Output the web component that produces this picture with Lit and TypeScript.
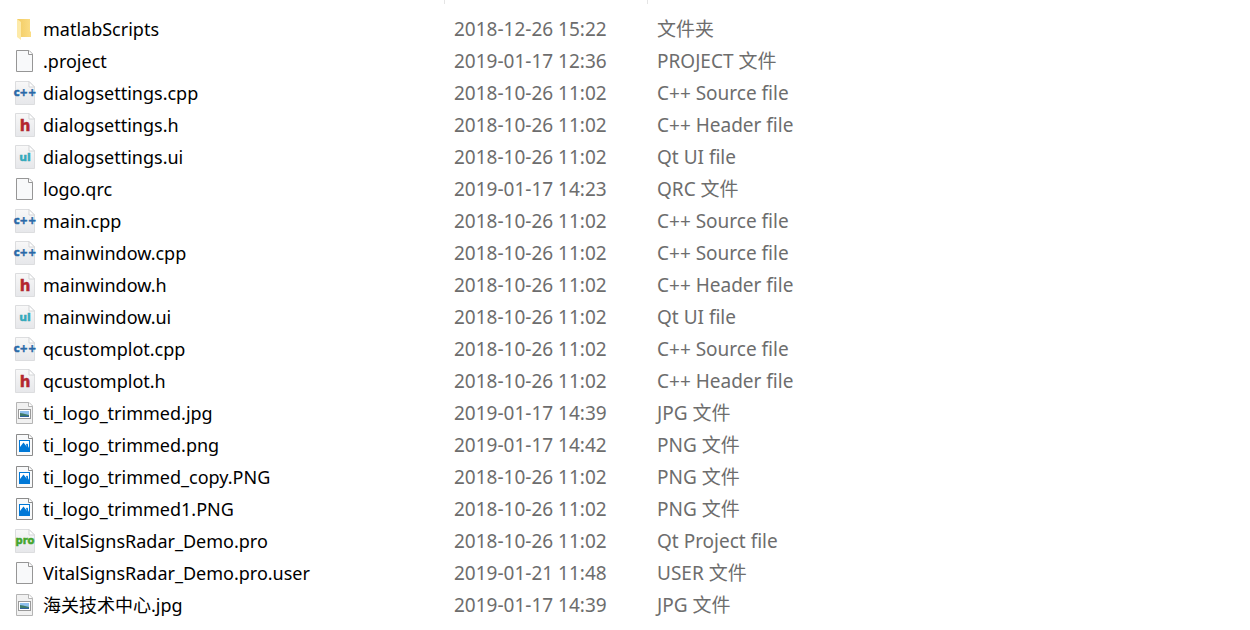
import { LitElement, html, css, svg, SVGTemplateResult } from "lit";
import { customElement, property } from "lit/decorators.js";

type Kind = "folder" | "blank" | "cpp" | "h" | "ui" | "pro" | "jpg" | "png";

interface Entry {
  kind: Kind;
  name: string;
  modified: string;
  type: string;
}

const entry = (kind: Kind, name: string, modified: string, type: string): Entry => ({ kind, name, modified, type });

const ENTRIES: Entry[] = [
  entry("folder", "matlabScripts", "2018-12-26 15:22", "文件夹"),
  entry("blank", ".project", "2019-01-17 12:36", "PROJECT 文件"),
  entry("cpp", "dialogsettings.cpp", "2018-10-26 11:02", "C++ Source file"),
  entry("h", "dialogsettings.h", "2018-10-26 11:02", "C++ Header file"),
  entry("ui", "dialogsettings.ui", "2018-10-26 11:02", "Qt UI file"),
  entry("blank", "logo.qrc", "2019-01-17 14:23", "QRC 文件"),
  entry("cpp", "main.cpp", "2018-10-26 11:02", "C++ Source file"),
  entry("cpp", "mainwindow.cpp", "2018-10-26 11:02", "C++ Source file"),
  entry("h", "mainwindow.h", "2018-10-26 11:02", "C++ Header file"),
  entry("ui", "mainwindow.ui", "2018-10-26 11:02", "Qt UI file"),
  entry("cpp", "qcustomplot.cpp", "2018-10-26 11:02", "C++ Source file"),
  entry("h", "qcustomplot.h", "2018-10-26 11:02", "C++ Header file"),
  entry("jpg", "ti_logo_trimmed.jpg", "2019-01-17 14:39", "JPG 文件"),
  entry("png", "ti_logo_trimmed.png", "2019-01-17 14:42", "PNG 文件"),
  entry("png", "ti_logo_trimmed_copy.PNG", "2018-10-26 11:02", "PNG 文件"),
  entry("png", "ti_logo_trimmed1.PNG", "2018-10-26 11:02", "PNG 文件"),
  entry("pro", "VitalSignsRadar_Demo.pro", "2018-10-26 11:02", "Qt Project file"),
  entry("blank", "VitalSignsRadar_Demo.pro.user", "2019-01-21 11:48", "USER 文件"),
  entry("jpg", "海关技术中心.jpg", "2019-01-17 14:39", "JPG 文件"),
];

const sheet = (stroke: string, fill = "#f8f9fa") => svg`
  <path d="M4.5 1.5H17L20.5 5V22.5H4.5Z" fill=${fill} stroke=${stroke}/>
  <path d="M16.5 1.5V5.5H20.5" fill="#fff" stroke=${stroke}/>`;

const badge = (label: string, color: string, x: number, y: number, size: number) => svg`
  <defs>
    <linearGradient id="paper" x1="0" y1="0" x2="0" y2="1">
      <stop offset="0" stop-color="#f8f8f8"/>
      <stop offset="1" stop-color="#e6e7ea"/>
    </linearGradient>
  </defs>
  <path d="M3.5 .5H17L22.5 6V23.5H3.5Z" fill="url(#paper)" stroke="#dcdddf"/>
  <path d="M17 .5V6H22.5Z" fill="#fff" stroke="#d4d5d7"/>
  <text class="label" x=${x} y=${y} font-size=${size} fill=${color} stroke=${color} text-anchor="middle">${label}</text>`;

const GLYPHS: Record<Kind, () => SVGTemplateResult> = {
  folder: () => svg`
    <defs>
      <linearGradient id="back" x1="0" y1="0" x2="1" y2="0">
        <stop offset="0" stop-color="#f2cb62"/>
        <stop offset="1" stop-color="#fbdd85"/>
      </linearGradient>
    </defs>
    <path d="M5 2H18V14L19 15V20H8Z" fill="url(#back)"/>
    <path d="M5 2L9 5V23L5 20Z" fill="#fdeaa9"/>`,
  blank: () => sheet("#969696"),
  cpp: () => badge("c++", "#2a69a8", 13, 15, 10),
  h: () => badge("h", "#b3272f", 13, 18, 15),
  ui: () => badge("ui", "#35a9bb", 13, 16, 11),
  pro: () => badge("pro", "#44a52c", 13, 15, 10),
  jpg: () => svg`
    ${sheet("#b4b4b4", "#f1f1f1")}
    <rect x="6.5" y="8.5" width="12" height="9" fill="#fff" stroke="#9a9a9a"/>
    <rect x="8" y="10" width="9" height="6" fill="#8fc0ee"/>
    <path d="M8 12L11 12.500L17 14V15H8Z" fill="#3f7a68"/>
    <path d="M8 15H17V16H8Z" fill="#2d62a0"/>`,
  png: () => svg`
    ${sheet("#8b8b8b")}
    <rect x="7" y="7" width="11" height="12" fill="#0078d7"/>
    <path d="M8 8H17V15L16 13V11.500L15 10.500L14 11.500L15 14L11.500 9.500L8 14Z" fill="#fff"/>`,
};

@customElement("file-icon")
export class FileIcon extends LitElement {
  @property() kind: Kind = "blank";

  static styles = css`
    :host { display: block; flex: none; width: 24px; height: 24px; }
    .glyph { display: block; overflow: visible; }
    .label { font-family: "DejaVu Sans", sans-serif; font-weight: 700; stroke-width: 0.5; }
  `;

  render() {
    return html`<svg class="glyph" width="24" height="24" viewBox="0 0 24 24" aria-hidden="true">${GLYPHS[this.kind]()}</svg>`;
  }
}

@customElement("app-root")
export class AppRoot extends LitElement {
  static styles = css`
    :host {
      display: block;
      background: #fff;
      color: #6d6d6d;
      font: 19px/32px "Noto Sans", "Noto Sans CJK SC", sans-serif;
    }
    .files { width: 100%; border-collapse: collapse; table-layout: fixed; }
    .col-name { width: 445px; }
    .col-date { width: 203px; }
    .head { height: 13px; padding: 0; vertical-align: top; }
    .divider { height: 4px; border-right: 1px solid #e5e5e5; }
    .cell { height: 32px; padding: 0 0 0 9px; text-align: left; font-weight: 400; white-space: nowrap; }
    .name { padding-left: 12px; color: #000; font-size: 18px; }
    .file { display: flex; align-items: center; gap: 7px; }
  `;

  render() {
    return html`
      <table class="files" aria-label="Files">
        <colgroup><col class="col-name"><col class="col-date"><col></colgroup>
        <thead>
          <tr>
            <th class="head" aria-label="Name"><div class="divider"></div></th>
            <th class="head" aria-label="Date modified"><div class="divider"></div></th>
            <th class="head" aria-label="Type"></th>
          </tr>
        </thead>
        <tbody>
          ${ENTRIES.map((e) => html`
            <tr>
              <th class="cell name" scope="row"><div class="file"><file-icon .kind=${e.kind}></file-icon><span>${e.name}</span></div></th>
              <td class="cell">${e.modified}</td>
              <td class="cell">${e.type}</td>
            </tr>`)}
        </tbody>
      </table>`;
  }
}
